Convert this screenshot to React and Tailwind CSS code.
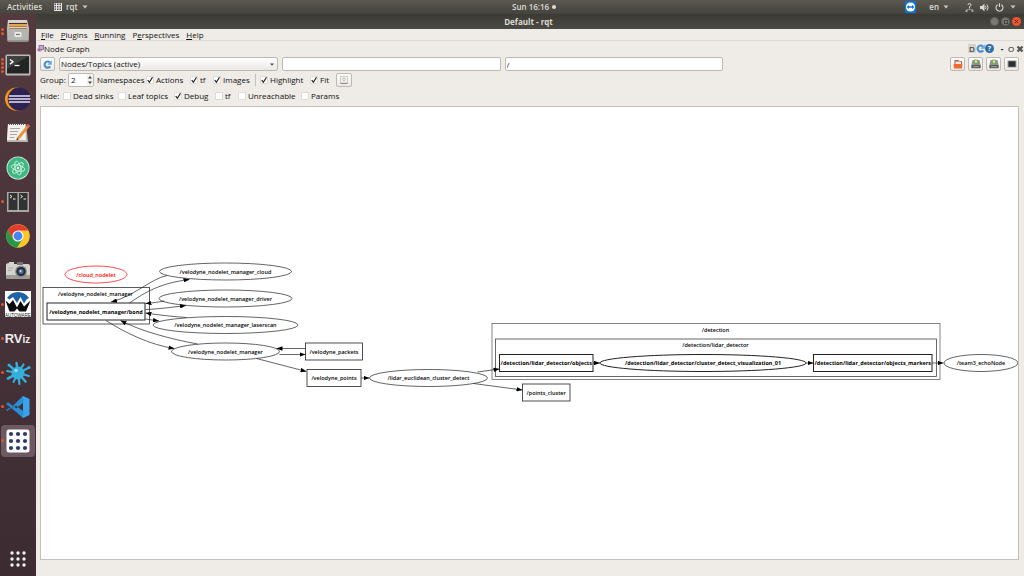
import React from "react";

/* ---------- launcher icons ---------- */

function FilesIcon() {
  return (
    <svg viewBox="0 0 24 24" className="size-6">
      <defs>
        <linearGradient id="cab" x1="0" y1="0" x2="0" y2="1">
          <stop offset="0" stopColor="#d8d8d5" />
          <stop offset="1" stopColor="#8d8d8a" />
        </linearGradient>
      </defs>
      <path d="M2 1h19l2 8v12q0 2-2 2H3q-2 0-2-2V9z" fill="url(#cab)" />
      <path d="M3 4h18v6H3z" fill="#4a2f22" />
      <path d="M3 5h18v2H3z" fill="#e8a34e" />
      <path d="M3 7.500h18v2H3z" fill="#f1d4a6" />
      <path d="M2 10h20v11H2z" fill="#b4b4b1" />
      <rect x="8.500" y="13" width="7" height="5" rx="1" fill="#e9e9e7" />
      <path d="M10 15.500h4" stroke="#777" strokeWidth="1.200" />
    </svg>
  );
}

function TerminalIcon() {
  return (
    <svg viewBox="0 0 26 22" className="h-[22px] w-[26px]">
      <rect x="0.500" y="0.500" width="25" height="21" rx="1.500" fill="#b9b9b6" />
      <rect x="2" y="2" width="22" height="17.500" fill="#232524" />
      <path d="M2 2h22L2 15z" fill="#3f4241" />
      <path d="M5 5.500l3 2.300-3 2.300" fill="none" stroke="#fff" strokeWidth="1.400" />
      <path d="M9.500 11.500h5" stroke="#fff" strokeWidth="1.300" />
    </svg>
  );
}

function EclipseIcon() {
  return (
    <svg viewBox="0 0 26 24" className="h-6 w-[26px]">
      <circle cx="11.500" cy="12" r="11.500" fill="#f7941e" />
      <circle cx="14.500" cy="12" r="11.800" fill="#49343c" />
      <circle cx="14.500" cy="12" r="11" fill="#2c2255" />
      <path d="M4 9h21M3.500 12h22M4 15h21" stroke="#e6e3f2" strokeWidth="1.500" />
    </svg>
  );
}

function EditorIcon() {
  return (
    <svg viewBox="0 0 24 22" className="h-[22px] w-6">
      <path d="M2 2h18l2 18H1z" fill="#b9b6b0" />
      <path d="M2 2h17l1 16H1z" fill="#f2f1ee" />
      <path d="M3 2h16" stroke="#555" strokeWidth="2" strokeDasharray="1 1" />
      <path d="M4 6.500h10M4 9.500h8M4 12.500h7M3.500 15.500h5" stroke="#a9a8a5" strokeWidth="1" />
      <path d="M22 2l2 2-10.500 13-3 1.300.7-3z" fill="#ee9036" />
      <path d="M22 2l2 2-1.400 1.700-2-2z" fill="#c8636b" />
      <path d="M11 16l-.5 2.300 2-.8z" fill="#333" />
    </svg>
  );
}

function AtomIcon() {
  return (
    <svg viewBox="0 0 24 24" className="size-6">
      <circle cx="12" cy="12" r="11.500" fill="#e3eee7" />
      <circle cx="12" cy="12" r="10.700" fill="#3fb983" />
      <g fill="none" stroke="#d3f0e1" strokeWidth="0.900">
        <ellipse cx="12" cy="12" rx="7" ry="2.800" transform="rotate(15 12 12)" />
        <ellipse cx="12" cy="12" rx="7" ry="2.800" transform="rotate(75 12 12)" />
        <ellipse cx="12" cy="12" rx="7" ry="2.800" transform="rotate(135 12 12)" />
      </g>
      <circle cx="12" cy="12" r="1.200" fill="#fff" />
    </svg>
  );
}

function TerminatorIcon() {
  return (
    <svg viewBox="0 0 22 20" className="h-5 w-[22px]">
      <rect width="22" height="20" fill="#a7a7a4" />
      <rect x="1.500" y="1" width="9" height="17" fill="#303332" />
      <rect x="12" y="1" width="8.500" height="17" fill="#303332" />
      <path d="M3 3l2 1.500L3 6M13.500 3l2 1.500-2 1.500M6 7h2.500M16.500 7H19" fill="none" stroke="#eee" />
    </svg>
  );
}

function ChromeIcon() {
  return (
    <svg viewBox="0 0 24 24" className="size-6">
      <circle cx="12" cy="12" r="11.800" fill="#fbc52c" />
      <path d="M12 12L1.800 6.100A11.800 11.800 0 0 1 22.200 6.500H12z" fill="#e33b2e" />
      <path d="M1.800 6.100L7 15l5-3V6.500z" fill="#e33b2e" />
      <path d="M1.800 6.100L7.200 15.200 12 17.500 16.500 15 11 23.800A11.800 11.800 0 0 1 1.800 6.100z" fill="#279847" />
      <circle cx="12" cy="12" r="5.500" fill="#fff" />
      <circle cx="12" cy="12" r="4.400" fill="#4685f2" />
    </svg>
  );
}

function CameraIcon() {
  return (
    <svg viewBox="0 0 24 18" className="h-[18px] w-6">
      <path d="M3 1h5v2h14q2 0 2 2v11q0 2-2 2H2q-2 0-2-2V4q0-2 3-2z" fill="#d4d4cf" />
      <path d="M0 14h24v2q0 2-2 2H2q-2 0-2-2z" fill="#9c9c98" />
      <rect x="11" y="1" width="6" height="3" fill="#77776f" />
      <circle cx="15" cy="10.500" r="6" fill="#8b8d8e" />
      <circle cx="15" cy="10.500" r="4.600" fill="#24282d" />
      <circle cx="15" cy="10.500" r="2.600" fill="#47719c" />
      <circle cx="14.500" cy="10" r="1" fill="#cfe0f2" />
      <path d="M2 7h5M2 9.500h4" stroke="#aaa" />
      <path d="M20 15l2-1.500 1 2z" fill="#f0a030" />
    </svg>
  );
}

function AutowareIcon() {
  return (
    <svg viewBox="0 0 26 26" className="size-[26px]">
      <rect width="26" height="26" fill="#fff" />
      <path d="M2 7Q6 1 13 1t11 6l-2.500 1.500-2.500 4L15.500 6 12 12 8 6 4.500 8.500z" fill="#1d62a6" />
      <path d="M0.500 9.500L4.500 13 8 9l4 7.500L15.500 10l3.500 5.500 6.500-6L21 20.500h-6.500l-2.500-3-2.500 3H4.500z" fill="#0b0b0c" />
      <text x="13" y="25.500" textAnchor="middle" fontSize="4.500" fontFamily="Liberation Sans, sans-serif" fill="#222">
        AUTOWARE
      </text>
    </svg>
  );
}

function RvizIcon() {
  return (
    <span className="flex items-baseline font-['Liberation_Sans',sans-serif] leading-none font-bold text-[#eee]">
      <span className="text-[13px]">RV</span>
      <span className="text-[10px]">iz</span>
    </span>
  );
}

function SplatIcon() {
  return (
    <svg viewBox="0 0 26 26" className="size-[26px]">
      <g stroke="#34aeda" strokeLinecap="round" fill="none">
        <path d="M13 13L11.500 3" strokeWidth="2.400" />
        <path d="M13 13L18.500 4.500" strokeWidth="2.200" />
        <path d="M13 13L5 6" strokeWidth="2.400" />
        <path d="M13 13L2 11" strokeWidth="2" />
        <path d="M13 13L3 18.500" strokeWidth="2.600" />
        <path d="M13 13L8.500 22" strokeWidth="2" />
        <path d="M13 13l1.500 11" strokeWidth="2.200" />
        <path d="M13 13l7.500 8.500" strokeWidth="2.600" />
        <path d="M13 13l11 3" strokeWidth="2" />
        <path d="M13 13l10.500-5" strokeWidth="2.400" />
      </g>
      <circle cx="13" cy="13" r="6.500" fill="#34aeda" />
      <circle cx="11" cy="10.500" r="1.800" fill="#8fdcf4" />
      <circle cx="24" cy="7.500" r="1.600" fill="#34aeda" />
      <circle cx="4" cy="5" r="1.500" fill="#34aeda" />
    </svg>
  );
}

function CodeIcon() {
  return (
    <svg viewBox="0 0 24 24" className="size-6">
      <path d="M17 1L3.500 14.500 1 16l-1-1.500L17.500 7z" fill="#1f7fc4" />
      <path d="M0 9l2-1.800 15.500 11.600V23z" fill="#2489ca" />
      <path d="M17 1l6.500 3v16L17 23z" fill="#3aa5ee" />
      <path d="M17 1L7 11l3 2.500L17.500 7.500zM17 23L7 13l3-2.500 7.500 6z" fill="#2b8fd6" />
    </svg>
  );
}

function DotGridIcon() {
  const at = [5, 12, 19];
  return (
    <svg viewBox="0 0 24 24" className="size-6">
      <rect x="0.500" y="0.500" width="23" height="23" rx="2.500" fill="#fdfdfd" />
      {at.map((y) => at.map((x) => <circle key={`${x}-${y}`} cx={x} cy={y} r="2.100" fill="#2b3a6e" />))}
    </svg>
  );
}

const launcher = [
  { name: "Files", Icon: FilesIcon, dots: 2 },
  { name: "Terminal", Icon: TerminalIcon, dots: 4 },
  { name: "Eclipse", Icon: EclipseIcon, dots: 0 },
  { name: "Text Editor", Icon: EditorIcon, dots: 0 },
  { name: "Atom", Icon: AtomIcon, dots: 0 },
  { name: "Terminator", Icon: TerminatorIcon, dots: 1 },
  { name: "Chrome", Icon: ChromeIcon, dots: 0 },
  { name: "Camera", Icon: CameraIcon, dots: 0 },
  { name: "Autoware", Icon: AutowareIcon, dots: 1 },
  { name: "RViz", Icon: RvizIcon, dots: 1 },
  { name: "Splat", Icon: SplatIcon, dots: 1 },
  { name: "Visual Studio Code", Icon: CodeIcon, dots: 1 },
  { name: "rqt", Icon: DotGridIcon, dots: 1, active: true },
];

function Launcher() {
  const grid = [2, 8, 14];
  return (
    <nav aria-label="Launcher" className="flex w-9 shrink-0 flex-col justify-between bg-linear-to-b from-[#543a3f] via-[#47333a] to-[#3c2c32] pt-px pb-2">
      <div className="flex h-[442px] flex-col justify-between">
        {launcher.map(({ name, Icon, dots, active }) => (
          <button
            key={name}
            aria-label={name}
            className={
              active
                ? "mx-px flex h-8 items-center rounded-sm bg-[#6d5a60] pr-1"
                : "mx-px flex h-8 items-center rounded-sm pr-1"
            }
          >
            <span className="flex w-[3px] shrink-0 flex-col items-center gap-px">
              {Array.from({ length: dots }, (_, i) => (
                <span key={i} className="size-[3px] rounded-full bg-[#e2582b]" />
              ))}
            </span>
            <span className="flex flex-1 items-center justify-center">
              <Icon />
            </span>
          </button>
        ))}
      </div>
      <button aria-label="Show Applications" className="flex justify-center">
        <svg viewBox="0 0 18 18" className="size-[18px]">
          {grid.map((y) => grid.map((x) => <circle key={`${x}-${y}`} cx={x + 1} cy={y + 1} r="1.700" fill="#f3f1f2" />))}
        </svg>
      </button>
    </nav>
  );
}

/* ---------- desktop bars ---------- */

function Caret() {
  return (
    <svg viewBox="0 0 6 4" className="h-1 w-[6px] shrink-0">
      <path d="M0.500 0.500h5L3 3.500z" fill="#c9c7c1" />
    </svg>
  );
}

function TopBar() {
  const at = [0.5, 3, 5.5];
  return (
    <header className="flex h-[14px] shrink-0 items-center bg-linear-to-b from-[#5a5850] to-[#45433e] font-semibold text-[#dfdbd2]">
      <div className="flex w-1/2 items-center pl-[7px]">
        <button>Activities</button>
        <button className="ml-3 flex items-center gap-1">
          <svg viewBox="0 0 8 8" className="size-2">
            <rect width="8" height="8" fill="#e8e6e1" />
            {at.map((y) => at.map((x) => <rect key={`${x}-${y}`} x={x} y={y} width="1.500" height="1.500" fill="#4b4a55" />))}
          </svg>
          rqt
          <Caret />
        </button>
      </div>
      <button className="flex items-center gap-[3px]">
        Sun 16:16
        <span className="size-1 rounded-full bg-[#dfdbd2]" />
      </button>
      <div className="ml-auto flex items-center pr-2">
        <svg viewBox="0 0 11 12" className="h-3 w-[11px]">
          <rect width="11" height="12" rx="1" fill="#0d74d8" />
          <circle cx="5.500" cy="6" r="4.600" fill="#fff" />
          <path d="M1.500 6L4 4v1.300h3V4l2.500 2L7 8V6.700H4V8z" fill="#0d74d8" />
        </svg>
        <button className="ml-[13px] flex items-center gap-1">
          en
          <Caret />
        </button>
        <button aria-label="System menu" className="ml-4 flex items-center gap-[6px]">
          <svg viewBox="0 0 9 9" className="size-[9px]">
            <path d="M4.500 4.500v2M1.500 8V6.500h6V8" fill="none" stroke="#8f8c85" />
            <rect x="0.500" y="7" width="2" height="2" fill="#a9a7a1" />
            <rect x="6.500" y="7" width="2" height="2" fill="#a9a7a1" />
            <path d="M3 2q0-1.500 1.500-1.500T6 2q0 1-1.500 1.500V5" fill="none" stroke="#dfdbd2" />
          </svg>
          <svg viewBox="0 0 9 9" className="size-[9px]">
            <path d="M0 3h2l2.500-2.500v8L2 6H0z" fill="#dfdbd2" />
            <path d="M5.500 3q1 1.500 0 3M7 1.500q2.200 3 0 6" fill="none" stroke="#dfdbd2" />
          </svg>
          <svg viewBox="0 0 9 9" className="size-[9px]">
            <path d="M2.700 1.700a3.500 3.500 0 1 0 3.600 0M4.500 0.300v3.700" fill="none" stroke="#dfdbd2" strokeWidth="1.100" />
          </svg>
          <Caret />
        </button>
      </div>
    </header>
  );
}

function TitleBar() {
  return (
    <div className="flex h-[15px] shrink-0 items-center bg-linear-to-b from-[#3b3a35] to-[#4b4943] text-[#dfdbd2]">
      <span className="flex-1" />
      <h1 className="font-bold">Default - rqt</h1>
      <span className="flex flex-1 items-center justify-end gap-[2px] pr-[3px]">
        <button aria-label="Minimize" className="size-[9px] rounded-full border border-[#605e58] bg-[#7b7972]" />
        <button aria-label="Maximize" className="flex size-[9px] items-center justify-center rounded-full border border-[#605e58] bg-[#7b7972]">
          <span className="size-[4px] border border-[#45433e]" />
        </button>
        <button aria-label="Close" className="flex size-[9px] items-center justify-center rounded-full bg-[#e9572b]">
          <svg viewBox="0 0 5 5" className="size-[5px]">
            <path d="M0.800 0.800l3.400 3.400M4.200 0.800L0.800 4.200" stroke="#6b2410" />
          </svg>
        </button>
      </span>
    </div>
  );
}

/* ---------- rqt controls ---------- */

const menus = [
  { key: "F", rest: "ile", before: "" },
  { key: "P", rest: "lugins", before: "" },
  { key: "R", rest: "unning", before: "" },
  { key: "e", rest: "rspectives", before: "P" },
  { key: "H", rest: "elp", before: "" },
];

function MenuBar() {
  return (
    <div role="menubar" className="flex h-3 shrink-0 items-center gap-[7px] border-b border-[#dcd9d4] pl-[5px]">
      {menus.map((m) => (
        <button key={m.before + m.key + m.rest} role="menuitem">
          {m.before}
          <span className="underline">{m.key}</span>
          {m.rest}
        </button>
      ))}
    </div>
  );
}

function ReloadIcon() {
  return (
    <svg viewBox="0 0 10 10" className="size-[9px]">
      <path d="M7.500 2.600A3.400 3.400 0 1 0 8 7" fill="none" stroke="#4b8fd0" strokeWidth="2.400" />
      <path d="M9.800 0.300v5H4.800z" fill="#6aa5dc" />
    </svg>
  );
}

function DockTitle() {
  return (
    <div className="flex h-[15px] shrink-0 items-center pl-px">
      <svg viewBox="0 0 8 8" className="size-[7px]">
        <rect x="2.500" y="0.500" width="5" height="4.500" fill="#c9a3cd" stroke="#8d6596" />
        <rect x="0.500" y="4" width="3" height="3" fill="#a46fad" />
        <path d="M3 7.500l3-2" stroke="#8d6596" />
      </svg>
      <h2>Node Graph</h2>
      <div className="ml-auto flex items-center">
        <button aria-label="Dock options" className="h-[9px] w-2 bg-[#d6d3cf] leading-[9px]">D</button>
        <button aria-label="Reload plugin">
          <ReloadIcon />
        </button>
        <button aria-label="Help" className="size-[9px] rounded-full bg-[#2f6cab] text-[7px] leading-[9px] font-bold text-white">?</button>
        <button aria-label="Minimize panel" className="ml-[5px] w-[6px] font-bold">-</button>
        <button aria-label="Float panel" className="ml-[2px] w-2">O</button>
        <button aria-label="Close panel" className="ml-px">
          <svg viewBox="0 0 8 8" className="size-2">
            <path d="M1.500 1.500l5 5M6.500 1.500l-5 5" stroke="#55534f" strokeWidth="2.200" />
          </svg>
        </button>
      </div>
    </div>
  );
}

function ToolButton({ label, children, className = "h-[14px] w-[15px]" }) {
  return (
    <button
      aria-label={label}
      className={`flex shrink-0 items-center justify-center rounded-[2px] border border-[#bdb9b4] bg-linear-to-b from-white to-[#ebe8e4] ${className}`}
    >
      {children}
    </button>
  );
}

function DriveIcon() {
  return (
    <svg viewBox="0 0 10 10" className="size-[10px]">
      <path d="M1.500 1h7L9.500 6v3h-9V6z" fill="#8e938c" />
      <rect x="0.500" y="6" width="9" height="3.200" rx="0.500" fill="#565a56" />
      <path d="M3.500 0.500h3v2H8L5 5.500 2 2.500h1.500z" fill="#7fae4a" />
      <path d="M4 1.500h2v1.500L5 4 4 3z" fill="#dcedc2" />
      <path d="M2 7.700h6" stroke="#c8cbc6" strokeWidth="0.700" />
    </svg>
  );
}

function Toolbar() {
  return (
    <div className="flex h-[14px] items-center gap-1">
      <ToolButton label="Refresh graph">
        <ReloadIcon />
      </ToolButton>
      <div className="grid flex-1 grid-cols-4 items-center gap-1">
        <div className="grid items-center">
          <select
            aria-label="Graph type"
            defaultValue="active"
            className="col-start-1 row-start-1 h-[14px] w-full appearance-none rounded-[2px] border border-[#bdb9b4] bg-linear-to-b from-white to-[#ebe8e4] pl-px"
          >
            <option value="nodes">Nodes only</option>
            <option value="active">Nodes/Topics (active)</option>
            <option value="all">Nodes/Topics (all)</option>
          </select>
          <svg viewBox="0 0 4 3" className="pointer-events-none col-start-1 row-start-1 mr-1 h-[3px] w-1 justify-self-end">
            <path d="M0 0.500h4L2 2.800z" fill="#4c4c4c" />
          </svg>
        </div>
        <input aria-label="Node filter" className="h-[14px] w-full rounded-[2px] border border-[#bdb9b4] bg-white px-px" />
        <input aria-label="Topic filter" defaultValue="/" className="h-[14px] w-full rounded-[2px] border border-[#bdb9b4] bg-white px-px" />
      </div>
      <div className="flex gap-[3px]">
        <ToolButton label="Load graph">
          <svg viewBox="0 0 10 10" className="size-[10px]">
            <path d="M1.500 1h4l1 1H9v5H1.500z" fill="#a3664b" />
            <path d="M2.500 2.500h5.500v3H2.500z" fill="#f7e6dc" />
            <path d="M0.500 5h9L9 9.500H1z" fill="#ec6a36" />
          </svg>
        </ToolButton>
        <ToolButton label="Save as DOT">
          <DriveIcon />
        </ToolButton>
        <ToolButton label="Save as SVG">
          <DriveIcon />
        </ToolButton>
        <ToolButton label="Save as image">
          <svg viewBox="0 0 10 8" className="h-2 w-[10px]">
            <rect x="0.500" y="0.500" width="9" height="7" fill="#9a9a98" />
            <rect x="1.500" y="1.300" width="7" height="5.400" fill="#2c2f2f" />
          </svg>
        </ToolButton>
      </div>
    </div>
  );
}

function Check({ children, checked = false, className }) {
  return (
    <label className={`flex shrink-0 items-center gap-[2px] whitespace-nowrap ${className}`}>
      <span className="grid size-2">
        <input
          type="checkbox"
          defaultChecked={checked}
          className="peer col-start-1 row-start-1 size-2 appearance-none rounded-[1px] border border-[#dedad5] bg-white"
        />
        <svg viewBox="0 0 8 8" className="pointer-events-none invisible col-start-1 row-start-1 size-2 peer-checked:visible">
          <path d="M1.700 4.200l1.700 2L6.500 1.300" fill="none" stroke="#222" strokeWidth="1.200" />
        </svg>
      </span>
      {children}
    </label>
  );
}

function GroupRow() {
  return (
    <div className="flex h-[14px] items-center">
      <label htmlFor="group-depth" className="w-7 shrink-0">Group:</label>
      <div className="flex h-[14px] w-[26px] shrink-0 items-center rounded-[2px] border border-[#bdb9b4] bg-white">
        <input id="group-depth" inputMode="numeric" defaultValue="2" className="w-0 flex-1 pl-[2px]" />
        <svg viewBox="0 0 6 12" className="h-3 w-[6px] bg-[#f3f1ee]">
          <path d="M1 4.500h4L3 2zM1 7.500h4L3 10z" fill="#444" />
        </svg>
      </div>
      <span className="ml-[3px] w-[49px] shrink-0">Namespaces</span>
      <Check checked className="w-11">Actions</Check>
      <Check checked className="w-[23px]">tf</Check>
      <Check checked className="w-[42px]">Images</Check>
      <span className="mr-1 h-3 w-px bg-[#c4c0bb]" />
      <Check checked className="w-[50px]">Highlight</Check>
      <Check checked className="w-[26px]">Fit</Check>
      <ToolButton label="Fit in view" className="h-[14px] w-4">
        <svg viewBox="0 0 8 8" className="size-2">
          <rect x="0.500" y="0.500" width="7" height="6.500" fill="#f3f2f0" stroke="#cfccc8" />
          <circle cx="4" cy="3.500" r="1.300" fill="none" stroke="#b3b0ac" strokeWidth="0.800" />
          <path d="M0.500 7.500h7" stroke="#8f8c88" />
        </svg>
      </ToolButton>
    </div>
  );
}

function HideRow() {
  return (
    <div className="flex h-[14px] items-center">
      <span className="w-[23px] shrink-0">Hide:</span>
      <Check className="w-[55px]">Dead sinks</Check>
      <Check className="w-14">Leaf topics</Check>
      <Check checked className="w-[41px]">Debug</Check>
      <Check className="w-[23px]">tf</Check>
      <Check className="w-[63px]">Unreachable</Check>
      <Check>Params</Check>
    </div>
  );
}

/* ---------- node graph, in scene units ---------- */

const clusters = [
  { label: "/velodyne_nodelet_manager", x: 85, y: 575, w: 213, h: 73, tx: 190, ty: 590, line: "#333" },
  { label: "/detection", x: 983, y: 647, w: 896, h: 112, tx: 1430, ty: 663, line: "#666" },
  { label: "/detection/lidar_detector", x: 990, y: 678, w: 882, h: 75, tx: 1430, ty: 693, line: "#444" },
];

const topics = [
  { label: "/velodyne_nodelet_manager/bond", x: 93, y: 606, w: 196, h: 34, strong: true },
  { label: "/velodyne_packets", x: 610, y: 686, w: 114, h: 34 },
  { label: "/velodyne_points", x: 613, y: 739, w: 108, h: 34 },
  { label: "/points_cluster", x: 1044, y: 768, w: 95, h: 34 },
  { label: "/detection/lidar_detector/objects", x: 998, y: 709, w: 187, h: 34, strong: true },
  { label: "/detection/lidar_detector/objects_markers", x: 1626, y: 709, w: 237, h: 34, strong: true },
];

const nodes = [
  { label: "/cloud_nodelet", cx: 191, cy: 549, rx: 62, color: "#ff0000" },
  { label: "/velodyne_nodelet_manager_cloud", cx: 450, cy: 543, rx: 132 },
  { label: "/velodyne_nodelet_manager_driver", cx: 450, cy: 597, rx: 133 },
  { label: "/velodyne_nodelet_manager_laserscan", cx: 450, cy: 650, rx: 145 },
  { label: "/velodyne_nodelet_manager", cx: 450, cy: 703, rx: 108 },
  { label: "/lidar_euclidean_cluster_detect", cx: 856, cy: 756, rx: 118 },
  { label: "/detection/lidar_detector/cluster_detect_visualization_01", cx: 1405, cy: 726, rx: 206, strong: true },
  { label: "/team3_echoNode", cx: 1961, cy: 726, rx: 74 },
];

const edges = [
  "M333 551C300 558 268 592 221 604",
  "M258 606C290 584 320 566 378 559",
  "M328 602C315 604 305 606 290 607",
  "M290 619C315 618 340 615 371 611",
  "M372 635C345 633 315 630 290 626",
  "M290 638L317 642",
  "M394 688C340 678 280 662 240 641",
  "M211 641C250 666 300 690 348 697",
  "M512 717L612 743",
  "M610 697L552 697",
  "M558 709L610 709",
  "M721 756L738 756",
  "M954 744L998 738",
  "M946 767L1044 780",
  "M1185 726L1199 726",
  "M1611 726L1626 726",
  "M1863 726L1886 726",
];

function NodeLabel({ x, y, strong, color = "#000", children }) {
  return (
    <text x={x} y={y + 4} textAnchor="middle" fill={color} className={strong ? "font-bold" : "font-semibold"}>
      {children}
    </text>
  );
}

function NodeGraph() {
  return (
    <main className="min-h-0 flex-1 border border-[#c4c0bb] bg-white">
      <svg viewBox="81 214 1954 904" className="h-full w-full font-['Open_Sans','Noto_Sans',sans-serif] text-[11px]" role="group" aria-label="Node graph">
        <defs>
          <marker id="head" viewBox="0 0 12 9" markerWidth="12" markerHeight="9" refX="12" refY="4.500" orient="auto" markerUnits="userSpaceOnUse">
            <path d="M0 0L12 4.500 0 9z" fill="#000" />
          </marker>
        </defs>
        {clusters.map((c) => (
          <g key={c.label}>
            <rect x={c.x} y={c.y} width={c.w} height={c.h} fill="none" stroke={c.line} strokeWidth="1.600" />
            <NodeLabel x={c.tx} y={c.ty - 3}>{c.label}</NodeLabel>
          </g>
        ))}
        {edges.map((d) => (
          <path key={d} d={d} fill="none" stroke="#222" strokeWidth="1.400" markerEnd="url(#head)" />
        ))}
        {topics.map((t) => (
          <g key={t.label}>
            <rect x={t.x} y={t.y} width={t.w} height={t.h} fill="none" stroke="#222" strokeWidth={t.strong ? 2 : 1.6} />
            <NodeLabel x={t.x + t.w / 2} y={t.y + t.h / 2} strong={t.strong}>{t.label}</NodeLabel>
          </g>
        ))}
        {nodes.map((n) => (
          <g key={n.label}>
            <ellipse cx={n.cx} cy={n.cy} rx={n.rx} ry="17" fill="none" stroke={n.color || "#222"} strokeWidth={n.strong ? 2 : 1.4} />
            <NodeLabel x={n.cx} y={n.cy} strong={n.strong} color={n.color}>{n.label}</NodeLabel>
          </g>
        ))}
      </svg>
    </main>
  );
}

export default function App() {
  return (
    <div className="flex h-screen flex-col overflow-hidden bg-[#efebe7] font-['Open_Sans','Noto_Sans',sans-serif] text-[8px] leading-[12px] font-medium text-[#111]">
      <TopBar />
      <div className="flex min-h-0 flex-1">
        <Launcher />
        <div className="flex min-w-0 flex-1 flex-col">
          <TitleBar />
          <MenuBar />
          <DockTitle />
          <div className="flex min-h-0 flex-1 flex-col pr-[5px] pb-4 pl-1">
            <div className="flex flex-col gap-[2px] pt-px pb-[3px]">
              <Toolbar />
              <GroupRow />
              <HideRow />
            </div>
            <NodeGraph />
          </div>
        </div>
      </div>
    </div>
  );
}
